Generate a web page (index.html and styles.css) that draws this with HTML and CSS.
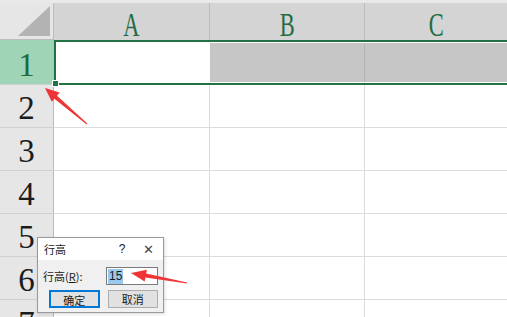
FILE: index.html
```html
<!DOCTYPE html>
<html lang="zh-CN">
<head>
    <meta charset="UTF-8">
    <meta name="viewport" content="width=device-width, initial-scale=1.0">
    <title>行高</title>
    <link rel="stylesheet" href="styles.css">
</head>
<body>

<div class="sheet">
    <div class="strip"></div>
    <div class="grid">
        <div class="corner"></div>
        <div class="colhead"><span class="letter">A</span></div>
        <div class="colhead"><span class="letter">B</span></div>
        <div class="colhead last"><span class="letter">C</span></div>

        <div class="rowhead active">1</div>
        <div class="selrow">
            <div class="cell current"></div>
            <div class="cell picked"></div>
            <div class="cell picked last"></div>
            <span class="handle"></span>
        </div>

        <div class="rowhead">2</div>
        <div class="cell"></div>
        <div class="cell"></div>
        <div class="cell last"></div>

        <div class="rowhead">3</div>
        <div class="cell"></div>
        <div class="cell"></div>
        <div class="cell last"></div>

        <div class="rowhead">4</div>
        <div class="cell"></div>
        <div class="cell"></div>
        <div class="cell last"></div>

        <div class="rowhead">5</div>
        <div class="cell"></div>
        <div class="cell"></div>
        <div class="cell last"></div>

        <div class="rowhead">6</div>
        <div class="cell"></div>
        <div class="cell"></div>
        <div class="cell last"></div>

        <div class="rowhead">7</div>
        <div class="cell"></div>
        <div class="cell"></div>
        <div class="cell last"></div>
    </div>

    <div class="dialog">
        <div class="dialog-title">
            <span class="title-text">行高</span>
            <span class="title-help">?</span>
            <span class="title-close">&#x2715;</span>
        </div>
        <div class="dialog-body">
            <div class="field">
                <label>行高(<u>R</u>):</label>
                <div class="input"><span class="selected">15</span></div>
            </div>
            <div class="actions">
                <button class="btn primary">确定</button>
                <button class="btn">取消</button>
            </div>
        </div>
    </div>

    <svg class="arrows" width="507" height="317" viewBox="0 0 507 317">
        <polygon points="45,88 59.6,92.6 57,95.7 87.3,123.6 86.7,124.4 54.4,98.7 51.8,101.8" />
        <polygon points="131,273 146.9,269.7 146.2,273.6 187,282.6 187,283.4 145.4,277.6 144.7,281.5" />
    </svg>
</div>

</body>
</html>
```

FILE: styles.css
```css
body {
    margin: 0;
    background-color: #ffffff;
    font-family: "Liberation Serif", serif;
}
.sheet {
    position: relative;
    width: 507px;
    height: 317px;
    overflow: hidden;
}
.strip {
    height: 3px;
    background-color: #e9e9e9;
}
.grid {
    display: grid;
    grid-template-columns: 54px 156px 155px 1fr;
    grid-template-rows: 37px 45px repeat(6, 43px);
}
.corner {
    position: relative;
    background-color: #e6e6e6;
    border-right: 1px solid #bcbcbc;
    border-bottom: 1px solid #bcbcbc;
}
.corner::after {
    content: "";
    position: absolute;
    inset: 0;
    background-color: #b3b3b3;
    clip-path: polygon(18px 33px, 50px 33px, 50px 3px);
}
.colhead {
    background-color: #d4d4d4;
    border-right: 1px solid #bdbdbd;
    display: flex;
    justify-content: center;
    align-items: center;
    padding-top: 7px;
    font-size: 34px;
    color: #236c44;
}
.colhead.last {
    border-right: none;
}
.letter {
    display: inline-block;
    transform: scaleX(0.66);
}
.rowhead {
    background-color: #e6e6e6;
    border-right: 1px solid #bcbcbc;
    border-bottom: 1px solid #d0d0d0;
    display: flex;
    justify-content: center;
    align-items: center;
    padding-top: 5px;
    font-size: 33px;
    color: #1c1c1c;
}
.rowhead.active {
    background-color: #9fd5b6;
    color: #1e6b41;
    border-top: 1px solid #9fd5b6;
}
.cell {
    border-right: 1px solid #dcdcdc;
    border-bottom: 1px solid #dcdcdc;
}
.cell.last {
    border-right: none;
}
.selrow {
    grid-column: 2 / -1;
    position: relative;
    display: grid;
    grid-template-columns: 154px 155px 1fr;
    border-top: 2px solid #217346;
    border-bottom: 2px solid #217346;
    border-left: 2px solid #217346;
    padding: 1px 0;
    background-color: #ffffff;
}
.selrow .cell {
    border-bottom: none;
}
.cell.current {
    background-color: #ffffff;
    border-right: 1px solid #ffffff;
}
.cell.picked {
    background-color: #c6c6c6;
    border-right: 1px solid #b4b4b4;
}
.cell.picked.last {
    border-right: none;
}
.handle {
    position: absolute;
    left: -4px;
    bottom: -4px;
    width: 5px;
    height: 5px;
    background-color: #217346;
    border: 1px solid #ffffff;
}
.dialog {
    position: absolute;
    left: 37px;
    top: 237px;
    width: 125px;
    height: 74px;
    border: 1px solid #9a9a9a;
    background-color: #f0f0f0;
    font-family: "Noto Sans CJK SC", "Noto Sans", sans-serif;
    font-size: 11px;
    color: #1a1a1a;
    box-shadow: 1px 1px 3px rgba(0, 0, 0, 0.15);
}
.dialog-title {
    height: 22px;
    background-color: #ffffff;
    display: flex;
    align-items: center;
    padding-left: 6px;
}
.title-text {
    flex: 1;
}
.title-help {
    width: 14px;
    margin-right: 12px;
    text-align: center;
    font-family: "Liberation Sans", sans-serif;
    font-size: 12px;
}
.title-close {
    width: 14px;
    margin-right: 8px;
    text-align: center;
    font-family: "DejaVu Sans", sans-serif;
    font-size: 13px;
    font-weight: 300;
    color: #444;
}
.dialog-body {
    padding: 7px 5px 0 5px;
}
.field {
    display: flex;
    align-items: center;
    height: 18px;
}
.field label {
    flex: 1;
}
.input {
    width: 49px;
    height: 16px;
    border: 1px solid #7a7a7a;
    background-color: #ffffff;
    display: flex;
    align-items: center;
    padding-left: 1px;
}
.selected {
    background-color: #99c9ef;
    font-family: "Liberation Sans", sans-serif;
    font-size: 12px;
    line-height: 15px;
    padding: 0 1px;
}
.actions {
    display: flex;
    gap: 8px;
    margin-top: 5px;
    padding-left: 6px;
}
.btn {
    width: 51px;
    height: 18px;
    padding: 0;
    border: 1px solid #adadad;
    background-color: #e1e1e1;
    font-family: "Noto Sans CJK SC", sans-serif;
    font-size: 11px;
    color: #1a1a1a;
}
.btn.primary {
    border: 2px solid #0078d7;
}
.arrows {
    position: absolute;
    left: 0;
    top: 0;
    pointer-events: none;
}
.arrows polygon {
    fill: #ee3434;
}
```
